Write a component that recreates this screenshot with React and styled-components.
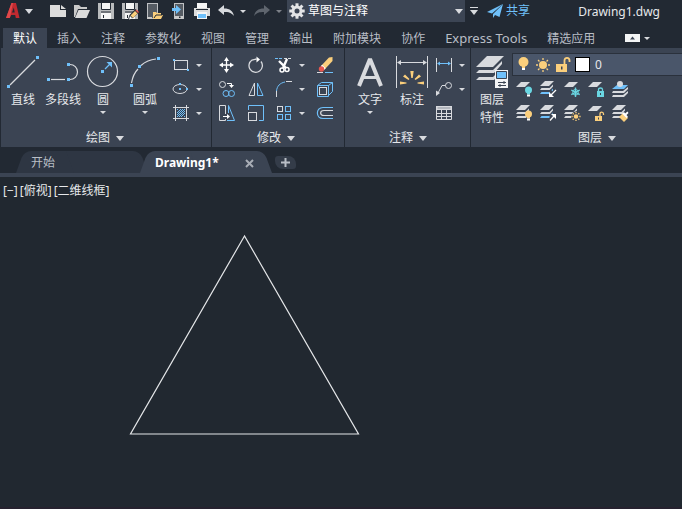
import { useState } from "react";
import styled, { createGlobalStyle } from "styled-components";

const GRAY = "#d8dade";
const BLUE = "#6fc0fa";
const YELLOW = "#fbcf7c";
const CYAN = "#6ad6e2";
const RED = "#e8574f";

const GlobalStyle = createGlobalStyle`
  * {
    box-sizing: border-box;
  }

  body {
    margin: 0;
    background: #212830;
    color: #e6e8eb;
    font-family: "Noto Sans", "Noto Sans CJK SC", sans-serif;
    font-size: 12px;
    line-height: 18px;
  }

  button, select {
    margin: 0;
    padding: 0;
    border: 0;
    background: none;
    color: inherit;
    font: inherit;
    white-space: nowrap;
    cursor: pointer;
  }

  svg {
    display: block;
    flex: none;
    overflow: visible;
    fill: none;
  }
`;

const Page = styled.div`
  display: flex;
  flex-direction: column;
  min-height: 100vh;
`;

const Caret = styled.span`
  flex: none;
  width: 0;
  height: 0;
  border-style: solid;
  border-color: ${GRAY} transparent transparent;
  border-width: ${(props) =>
    props.$size === "large" ? "5px 4px 0" : "3px 3px 0"};
  opacity: ${(props) => (props.$dim ? 0.5 : 1)};
`;

/* ---------- title bar ---------- */

const TitleBar = styled.header`
  display: flex;
  align-items: center;
  height: 28px;
  padding: 0 6px 6px;
  background: #222933;
`;

const BrandButton = styled.button`
  display: flex;
  align-items: center;
  gap: 5px;
  margin-right: 17px;
`;

const QuickTools = styled.div`
  display: flex;
  align-items: center;
  gap: 8px;
`;

const QuickButton = styled.button`
  display: flex;
  align-items: center;
  gap: 6px;
`;

const Workspace = styled.label`
  position: relative;
  display: flex;
  align-items: center;
  flex: 0 1 178px;
  align-self: stretch;
  margin-left: 5px;
  padding: 0 2px;
  background: #3c4554;

  select {
    flex: 1;
    min-width: 0;
    height: 20px;
    padding-left: 3px;
    appearance: none;
    outline: none;
    color: #fff;
  }
`;

const MoreButton = styled.button`
  display: flex;
  flex-direction: column;
  align-items: center;
  gap: 2px;
  margin: 0 9px 0 5px;

  &::before {
    content: "";
    width: 8px;
    height: 1px;
    background: ${GRAY};
  }
`;

const ShareButton = styled.button`
  display: flex;
  align-items: center;
  gap: 3px;
  color: ${BLUE};
`;

const FileName = styled.h1`
  flex: 1;
  margin: 2px 16px 0 24px;
  font-size: 12px;
  font-weight: 400;
  text-align: right;
  white-space: nowrap;
`;

/* ---------- ribbon ---------- */

const RibbonTabs = styled.nav`
  display: flex;
  height: 20px;
  padding-left: 3px;
  background: #222933;
`;

const RibbonTab = styled.button`
  padding: 0 10px;
  background: ${(props) => (props.$active ? "#3b4453" : "transparent")};
  color: ${(props) => (props.$active ? "#fff" : "#b9bec6")};
  font-size: ${(props) => (props.$latin ? 13 : 12)}px;
  line-height: ${(props) => (props.$latin ? 20 : 22)}px;
`;

const CollapseButton = styled.button`
  display: flex;
  align-items: center;
  gap: 4px;
  margin-left: 20px;
`;

const Ribbon = styled.div`
  display: flex;
  height: 99px;
  padding-left: 1px;
  background: #3b4453;
  border-left: 1px solid #222933;
`;

const PanelBox = styled.section`
  display: flex;
  flex-direction: column;
  flex: ${(props) => (props.$grow ? "1" : "none")};
  min-width: 0;
  padding-top: 5px;
  padding-right: ${(props) => props.$end || 0}px;
  padding-left: 1px;
  border-right: ${(props) => (props.$grow ? 0 : 1)}px solid #222933;
`;

const PanelBody = styled.div`
  display: flex;
  flex: 1;
`;

const PanelTitle = styled.button`
  display: flex;
  align-items: center;
  justify-content: center;
  gap: 6px;
  height: 20px;
  padding-top: 2px;
  padding-left: ${(props) => (props.$grow ? 40 : 0)}px;
`;

const BigButton = styled.button`
  display: flex;
  flex-direction: column;
  align-items: center;
  width: ${(props) => props.$width || 40}px;
  padding-top: 3px;

  ${Caret} {
    margin-top: 2px;
  }
`;

const BigLabel = styled.span`
  margin-top: 3px;
  white-space: pre-line;
`;

const ToolGrid = styled.div`
  display: grid;
  grid-template-columns: ${(props) => props.$columns};
  grid-auto-rows: 24px;
`;

const SmallButton = styled.button`
  display: flex;
  align-items: center;
  justify-content: ${(props) => (props.$menu ? "flex-start" : "center")};
  gap: 7px;
  padding-left: ${(props) => (props.$menu ? 6 : 0)}px;
`;

const LayerArea = styled.div`
  display: flex;
  flex-direction: column;
  flex: 1;
  min-width: 0;
`;

const LayerPicker = styled.label`
  display: flex;
  align-items: center;
  gap: 5px;
  height: 23px;
  margin-bottom: 1px;
  padding-left: 5px;
  background: #4a566a;
  border: 1px solid #2a313c;
  border-right: 0;

  select {
    flex: 1;
    min-width: 0;
    appearance: none;
    outline: none;
  }
`;

const Swatch = styled.span`
  width: 15px;
  height: 15px;
  background: #fff;
  border: 1px solid #000;
`;

/* ---------- drawing files ---------- */

const FileTabs = styled.nav`
  display: flex;
  align-items: flex-end;
  height: 30px;
  padding-left: 20px;
  background: #222933;
  border-bottom: 4px solid #3b4453;
`;

const FileTab = styled.div`
  position: relative;
  z-index: ${(props) => (props.$active ? 1 : 0)};
  display: flex;
  align-items: center;
  justify-content: space-between;
  width: 124px;
  height: 22px;
  padding: 2px 14px 0 11px;
  color: ${(props) => (props.$active ? "#fff" : "#b9bec6")};
  font-weight: ${(props) => (props.$active ? 700 : 400)};

  &::before,
  &::after {
    content: "";
    position: absolute;
    z-index: -1;
    top: 0;
    bottom: 0;
    background: ${(props) => (props.$active ? "#3b4453" : "#2e3643")};
  }

  &::before {
    left: 0;
    right: 50%;
    border-top-left-radius: 7px;
    transform: skewX(-20deg);
  }

  &::after {
    left: 40%;
    right: 0;
    border-top-right-radius: 7px;
    transform: skewX(20deg);
  }
`;

const AddTab = styled.button`
  display: flex;
  align-items: center;
  justify-content: center;
  width: 21px;
  height: 13px;
  margin: 0 0 4px 7px;
  border-radius: 3px 8px 3px 8px;
  background: #343c49;
`;

const Viewport = styled.main`
  position: relative;
  flex: 1;
  padding: 5px 3px;
  background: #212830;
`;

const ViewControls = styled.div`
  display: flex;
  gap: 2px;
`;

const Drawing = styled.svg`
  position: absolute;
  inset: 0;
  width: 100%;
  height: 100%;
  pointer-events: none;
`;

const CommandEdge = styled.footer`
  height: 2px;
  background: #26222f;
`;

/* ---------- icons ---------- */

const Dot = ({ x, y, s = 3, fill = BLUE }) => (
  <rect x={x - s / 2} y={y - s / 2} width={s} height={s} fill={fill} />
);

const Bulb = ({ x, y, color, r = 3.5 }) => (
  <g>
    <circle cx={x} cy={y} r={r} fill={color} />
    <path d={`M${x - 1.5} ${y + r - 1}h3v2h-3z`} fill={color} />
    <path d={`M${x - 1.5} ${y + r + 1}h3v2h-3z`} fill="#fff" />
  </g>
);

const Sun = ({ x, y, r, ray }) => (
  <g>
    <circle cx={x} cy={y} r={r} fill={YELLOW} />
    {[0, 45, 90, 135, 180, 225, 270, 315].map((angle) => (
      <path
        key={angle}
        d={`M${x + r + 1} ${y}h${ray}`}
        stroke={YELLOW}
        strokeWidth="1.3"
        transform={`rotate(${angle} ${x} ${y})`}
      />
    ))}
  </g>
);

const Sheet = ({ y = 0, fill = GRAY }) => (
  <path d={`M5 ${y}h9l-5 5H0z`} fill={fill} />
);

// stack of three sheets, the lower two show only their edge
const Stack = ({ middle = GRAY, bottom = GRAY }) => (
  <g>
    <Sheet />
    <path d="M1.5 7H9.5L13 3.5V5.5L10 9H0z" fill={middle} />
    <path d="M1.5 11H9.5L13 7.5V9.5L10 13H0z" fill={bottom} />
  </g>
);

const Floppy = () => (
  <g>
    <path d="M0 0h16v16H0z" fill="#b9bbbd" />
    <path d="M4 0h8v6H4z" fill="#f5f5f5" />
    <path d="M3 10h10v6H3z" fill="#f5f5f5" />
    <path d="M3 9h10M3.5 0v6.5h9V0M5.5 12v3" stroke="#222933" />
  </g>
);

const icons = {
  logo: (
    <g>
      <path d="M0 15L5.5 0H10L13.5 15H9.8L9.2 12H5.2L3.8 15z" fill="#c02a30" />
      <path d="M6 9.5L7.8 4.5L8.7 9.5z" fill="#222933" />
      <path d="M0 15L5.5 0H7L3.8 15z" fill="#e0484a" />
    </g>
  ),
  new: (
    <g>
      <path d="M0 2H10V7H16V14H0z" fill="#dcdcdc" />
      <path d="M11 2L16 6H11z" fill="#dcdcdc" />
    </g>
  ),
  open: (
    <g>
      <path d="M0 14V2H5L7 4H13V6H4L1 14z" fill="#c9c9c9" />
      <path d="M4.5 7H16L12.5 15H1z" fill="#dcdcdc" />
    </g>
  ),
  save: <Floppy />,
  saveAs: (
    <g>
      <Floppy />
      <path d="M6 16.5L7.5 12L13.5 6L17 9.5L11 15z" fill="#222933" />
      <path d="M8.5 12.5L13 8L15.5 10.5L11 15z" fill={YELLOW} />
      <path d="M13.5 7.5L14.5 6.5L17 9L16 10z" fill={RED} />
      <path d="M8 13L10.5 15.5L7 16.5z" fill="#fff" />
    </g>
  ),
  openMobile: (
    <g>
      <rect x="1.5" y="0.5" width="10" height="15" fill="#555b63" stroke="#bfc1c4" />
      <path d="M1 14h5v2H1z" fill="#c9c9c9" />
      <path d="M7 16V9h3l1 1h4v2h2l-2 4z" fill={YELLOW} />
      <path d="M8 15l2-3h6" stroke="#222933" />
    </g>
  ),
  saveMobile: (
    <g>
      <rect x="4.5" y="0.5" width="9" height="15" fill="#555b63" stroke="#bfc1c4" />
      <path d="M5 13h8v3H5z" fill="#c9c9c9" />
      <path d="M9 13.5h1.5v1.5H9z" fill="#222933" />
      <path d="M2 5h4V2l5 4.5L6 11V8H2z" fill={BLUE} />
    </g>
  ),
  print: (
    <g>
      <path d="M3 0h10v5H3z" fill="#f5f5f5" />
      <path d="M0 5h16v8H0z" fill="#dcdcdc" />
      <path d="M2 6.5h12" stroke="#222933" />
      <path d="M3 9h10v7H3z" fill="#f5f5f5" />
      <path d="M4 11h8v4H4z" fill={BLUE} />
    </g>
  ),
  undo: (
    <path d="M0 7L6 2V5.5C12 5.5 15 8 16 13C13 9.5 11 9 6 9V12z" fill={GRAY} />
  ),
  redo: (
    <path d="M16 7L10 2V5.5C4 5.5 1 8 0 13C3 9.5 5 9 10 9V12z" fill="#5f656e" />
  ),
  gear: (
    <g stroke="#e4e5e7">
      <circle cx="8" cy="8" r="4" strokeWidth="3" />
      {[0, 45, 90, 135, 180, 225, 270, 315].map((angle) => (
        <path
          key={angle}
          d="M8 3V0.3"
          strokeWidth="3"
          transform={`rotate(${angle} 8 8)`}
        />
      ))}
    </g>
  ),
  share: (
    <g fill={BLUE}>
      <path d="M0 9L16 1L5 10.5z" />
      <path d="M6 11L16 1L12.5 14L8 12L6 15z" />
    </g>
  ),
  line: (
    <g>
      <path d="M3 29L28 4" stroke={GRAY} strokeWidth="1.2" />
      <Dot x={1.5} y={30.5} />
      <Dot x={30.5} y={1.5} />
    </g>
  ),
  polyline: (
    <g>
      <path d="M4 23.5H18" stroke={GRAY} strokeWidth="1.2" />
      <path d="M23 8.5A7.5 7.5 0 0 1 23 23.5" stroke={GRAY} strokeWidth="1.2" />
      <Dot x={1.5} y={23.5} />
      <Dot x={21.5} y={23.5} />
      <Dot x={21.5} y={8.5} />
    </g>
  ),
  circle: (
    <g>
      <circle cx="15.5" cy="15.5" r="15" stroke={GRAY} strokeWidth="1.2" />
      <Dot x={15.5} y={15.5} />
      <path d="M18 13L23 8" stroke={BLUE} strokeWidth="1.3" />
      <path d="M25 6V11.5L19.5 6z" fill={BLUE} />
    </g>
  ),
  arc: (
    <g>
      <path
        d="M2.5 27C3.5 21 6 16 9 13M12 9.5C17 5 21 3.5 27 3"
        stroke={GRAY}
        strokeWidth="1.2"
      />
      <Dot x={2.5} y={29.5} />
      <Dot x={10.5} y={10.5} />
      <Dot x={29.5} y={2.5} />
    </g>
  ),
  rect: (
    <g>
      <rect x="1.5" y="3.5" width="13" height="9" stroke={GRAY} />
      <Dot x={1} y={3} s={2} />
      <Dot x={15} y={13} s={2} />
    </g>
  ),
  ellipse: (
    <g>
      <ellipse cx="7" cy="8" rx="7" ry="4.5" stroke={GRAY} />
      <Dot x={7} y={3} s={2} />
      <Dot x={7} y={8} s={2} />
      <Dot x={14} y={8} s={2} />
    </g>
  ),
  hatch: (
    <g>
      <path d="M2.5 0V16M13.5 0V16M0 2.5H16M0 13.5H16" stroke={GRAY} />
      <path
        d="M4 8L8 4M4 12L12 4M8 12L12 8M4 5L5 4M11 12L12 11M4 10L10 4M6 12L12 6"
        stroke={BLUE}
      />
    </g>
  ),
  move: (
    <g fill="#fff">
      <path d="M7.5 2V14M2 8H13" stroke="#fff" strokeWidth="1.3" />
      <path d="M7.5 0L10 4H5zM7.5 16L10 12H5zM0 8L4 5.5V10.5zM15 8L11 5.5V10.5z" />
    </g>
  ),
  rotate: (
    <g>
      <path d="M13 4.5A6.7 6.7 0 1 1 4 3L8.5 2" stroke={GRAY} strokeWidth="1.3" />
      <path d="M8.5 -0.5L12 2.5L8.5 5.5z" fill="#fff" />
    </g>
  ),
  trim: (
    <g>
      <path d="M-1 1.5H6" stroke={BLUE} strokeDasharray="3 1" />
      <path d="M8 1.5H16" stroke={GRAY} strokeDasharray="3 1" />
      <path d="M3 4L10 11M11 2L7 11" stroke="#fff" strokeWidth="2.4" />
      <circle cx="6" cy="13" r="2" stroke="#fff" strokeWidth="1.5" />
      <circle cx="11" cy="12.5" r="2" stroke="#fff" strokeWidth="1.5" />
    </g>
  ),
  erase: (
    <g>
      <path d="M4 9L12 0.5L15.5 0V4L7.5 12.5z" fill={YELLOW} />
      <path d="M4.5 8.5L8 12" stroke="#fff" strokeWidth="2" />
      <circle cx="4.5" cy="12" r="2.7" fill={RED} />
      <path d="M0 15.5H6" stroke={GRAY} />
      <path d="M8 15.5H16" stroke={BLUE} />
    </g>
  ),
  copy: (
    <g>
      <circle cx="3.5" cy="3.5" r="3" stroke={GRAY} />
      <path d="M8 2.5H12.5V4" stroke="#fff" />
      <path d="M10 4H15L12.5 7z" fill="#fff" />
      <circle cx="7" cy="12.5" r="3" stroke={BLUE} />
      <circle cx="12.5" cy="12.5" r="3" stroke={BLUE} />
    </g>
  ),
  mirror: (
    <g>
      <path d="M6.5 2V14.5H1z" stroke={GRAY} />
      <path d="M9.5 2V14.5H15z" stroke={BLUE} />
    </g>
  ),
  fillet: (
    <g>
      <path d="M0.5 10C1 5 4 2 9 1" stroke={BLUE} />
      <path d="M10 0.5H16M0.5 10V16" stroke={GRAY} />
    </g>
  ),
  explode: (
    <g>
      <path d="M0.5 4.5L4.5 1.5H15.5V10.5L11.5 14.5" stroke={BLUE} />
      <path d="M0.5 4.5H11.5V15.5H0.5zM11.5 4.5L15.5 1.5" stroke={BLUE} />
      <rect x="2.5" y="6.5" width="7" height="7" stroke={GRAY} />
    </g>
  ),
  stretch: (
    <g>
      <path d="M6.5 9V0.5H0.5V15.5H6.5V14" stroke={GRAY} />
      <path d="M9.5 8V0.5L15.5 15.5H8" stroke={BLUE} />
      <path d="M4 11.5H9" stroke="#fff" />
      <path d="M8 9L11 11.5L8 14z" fill="#fff" />
    </g>
  ),
  scale: (
    <g>
      <path d="M0.5 5V0.5H15.5V15.5H11" stroke={BLUE} />
      <rect x="0.5" y="7.5" width="8" height="8" stroke={GRAY} />
    </g>
  ),
  array: (
    <g>
      <rect x="1.5" y="1.5" width="5" height="5" stroke={GRAY} />
      <rect x="9.5" y="1.5" width="5" height="5" stroke={BLUE} />
      <rect x="1.5" y="9.5" width="5" height="5" stroke={BLUE} />
      <rect x="9.5" y="9.5" width="5" height="5" stroke={BLUE} />
    </g>
  ),
  offset: (
    <g>
      <path d="M16 2.5H6C-1.5 2.5 -1.5 13.5 6 13.5H16" stroke={BLUE} strokeWidth="1.2" />
      <path d="M16 5.5H7C2.5 5.5 2.5 10.5 7 10.5H16" stroke={GRAY} strokeWidth="1.2" />
    </g>
  ),
  text: (
    <g stroke={GRAY} strokeWidth="4">
      <path d="M5 30L16 3L27 30" strokeLinejoin="bevel" />
      <path d="M9 21.5H23" strokeWidth="3" />
    </g>
  ),
  dimension: (
    <g>
      <path d="M0.5 0V32M31.5 0V32M4 6.5H28" stroke={GRAY} />
      <path d="M1 6.5L5 4V9zM31 6.5L27 4V9z" fill={GRAY} />
      <path
        d="M14.3 15H17.7L16.7 22H15.3zM7 20.5L9 18.5L13.5 23L12.5 24zM25 20.5L23 18.5L18.5 23L19.5 24zM4 25.5L10.5 26.5V27.5L4 28.5zM28 25.5L21.5 26.5V27.5L28 28.5z"
        fill={YELLOW}
      />
    </g>
  ),
  linear: (
    <g>
      <path d="M0.5 1V15M15.5 1V15" stroke={GRAY} />
      <path d="M3 6.5H13" stroke={BLUE} />
      <path d="M1 6.5L4 4.5V8.5zM15 6.5L12 4.5V8.5z" fill={BLUE} />
    </g>
  ),
  leader: (
    <g>
      <circle cx="12.5" cy="4.5" r="3" stroke={GRAY} />
      <path d="M9.5 4.5H6L2 12" stroke={GRAY} />
      <path d="M0 15V9.5L4 12z" fill={GRAY} />
    </g>
  ),
  table: (
    <g>
      <path d="M0 1h16v4H0z" fill={GRAY} />
      <path d="M1.5 3h13" stroke="#8b919b" />
      <path d="M0.5 2V14.5H15.5V2M0 8.5H16M0 11.5H16M5.5 5V14M10.5 5V14" stroke={GRAY} />
    </g>
  ),
  layerProps: (
    <g>
      <path d="M11 0H28L17 11H0z" fill={GRAY} />
      <path d="M3 14H17L26 5V8L18 17H0zM3 21H17L20 18V22L18 24H0z" fill={GRAY} />
      <path d="M19 14h13v18H19z" fill="#f3f4f5" />
      <path d="M20.5 15.5h10v7h-10z" fill={BLUE} stroke="#3b4453" />
      <path d="M22 26.5h8M22 29.5h8M28 25v3M24 28v3" stroke="#3b4453" />
    </g>
  ),
  bulb: <Bulb x={5.5} y={5} r={5} color={YELLOW} />,
  sun: <Sun x={8} y={8} r={4} ray={2} />,
  unlock: (
    <g>
      <path d="M0 7h11v8H0z" fill={YELLOW} />
      <path d="M8.5 8V3.5C8.5 0 13.5 0 13.5 3.5V5" stroke={YELLOW} strokeWidth="1.8" />
      <path d="M5 9.5h1.5v3H5z" fill="#3b4453" />
    </g>
  ),
  layerOff: (
    <g>
      <Sheet y={1} />
      <Bulb x={12.5} y={9} color={CYAN} />
    </g>
  ),
  layerIsolate: (
    <g>
      <Stack bottom={BLUE} />
      <path d="M9 16L10 8L17 14L15 17z" fill="#3b4453" />
      <path d="M16 9L11 14" stroke="#fff" strokeWidth="1.3" />
      <path d="M9 16V11L14 16z" fill="#fff" />
    </g>
  ),
  layerFreeze: (
    <g>
      <Sheet y={1} />
      <path
        d="M11.5 6.5V16M7.3 9L15.7 13.6M7.3 13.6L15.7 9"
        stroke={CYAN}
        strokeWidth="1.4"
      />
      <circle cx="11.5" cy="11.3" r="2.8" stroke={CYAN} />
    </g>
  ),
  layerLock: (
    <g>
      <Sheet y={1} />
      <path d="M9 10h7v6H9z" fill={CYAN} />
      <path d="M10.5 10V8.5C10.5 6.5 14.5 6.5 14.5 8.5V10" stroke={CYAN} strokeWidth="1.3" />
      <path d="M12 12h1v2h-1z" fill="#3b4453" />
    </g>
  ),
  layerCurrent: (
    <g>
      <path d="M5 4h11l-4 4H0z" fill={BLUE} />
      <circle cx="8" cy="3" r="3" fill={GRAY} />
      <path d="M1 10H11L16 6V8L12 12H0zM1 14H11L16 10V12L12 16H0z" fill={GRAY} />
    </g>
  ),
  layerOn: (
    <g>
      <Stack />
      <Bulb x={12.5} y={9} color={YELLOW} />
    </g>
  ),
  layerUnisolate: (
    <g>
      <Stack bottom={BLUE} />
      <path d="M9 16L10 9L17 8V17z" fill="#3b4453" />
      <path d="M10 15.5L14 11" stroke="#fff" strokeWidth="1.3" />
      <path d="M16 9V14L11 9z" fill="#fff" />
    </g>
  ),
  layerThaw: (
    <g>
      <Stack />
      <circle cx="12" cy="11.5" r="5" fill="#3b4453" />
      <Sun x={12} y={11.5} r={2.3} ray={1.3} />
    </g>
  ),
  layerUnlock: (
    <g>
      <Sheet y={1} />
      <path d="M7 11h7v5H7z" fill={YELLOW} />
      <path d="M12 11V9C12 6.5 15.5 6.5 15.5 9V10" stroke={YELLOW} strokeWidth="1.3" />
      <path d="M10 12.5h1v2h-1z" fill="#3b4453" />
    </g>
  ),
  layerMatch: (
    <g>
      <Stack />
      <path d="M7 12L11 8L16 13L12 17z" fill={YELLOW} />
      <path d="M10 8.5L12 7L13 8.5L15.5 6.5L16.5 8L14.5 10L16 12L14.5 13z" fill="#fff" />
    </g>
  ),
};

const Icon = ({ name, width = 16, height = 16 }) => (
  <svg width={width} height={height} aria-hidden="true">
    {icons[name]}
  </svg>
);

/* ---------- data ---------- */

const quickTools = ["new", "open", "save", "saveAs", "openMobile", "saveMobile", "print"];

const ribbonTabs = [
  { label: "默认" },
  { label: "插入" },
  { label: "注释" },
  { label: "参数化" },
  { label: "视图" },
  { label: "管理" },
  { label: "输出" },
  { label: "附加模块" },
  { label: "协作" },
  { label: "Express Tools", latin: true },
  { label: "精选应用" },
];

const modifyTools = [
  { name: "move" },
  { name: "rotate" },
  { name: "trim", menu: true },
  { name: "erase" },
  { name: "copy" },
  { name: "mirror" },
  { name: "fillet", menu: true },
  { name: "explode" },
  { name: "stretch" },
  { name: "scale" },
  { name: "array", menu: true },
  { name: "offset" },
];

const layerTools = [
  "layerOff",
  "layerIsolate",
  "layerFreeze",
  "layerLock",
  "layerCurrent",
  "layerOn",
  "layerUnisolate",
  "layerThaw",
  "layerUnlock",
  "layerMatch",
];

/* ---------- parts ---------- */

const Panel = ({ title, grow, end, children }) => (
  <PanelBox $grow={grow} $end={end}>
    <PanelBody>{children}</PanelBody>
    <PanelTitle $grow={grow}>
      {title}
      <Caret $size="large" />
    </PanelTitle>
  </PanelBox>
);

const BigTool = ({ name, label, width, menu }) => (
  <BigButton $width={width}>
    <Icon name={name} width={32} height={32} />
    <BigLabel>{label}</BigLabel>
    {menu && <Caret />}
  </BigButton>
);

const SmallTool = ({ name, menu, align }) => (
  <SmallButton $menu={menu || align} aria-label={name}>
    <Icon name={name} />
    {menu && <Caret />}
  </SmallButton>
);

const App = () => {
  const [activeTab, setActiveTab] = useState("默认");

  return (
    <Page>
      <GlobalStyle />
      <TitleBar>
        <BrandButton aria-label="menu">
          <Icon name="logo" width={14} />
          <Caret $size="large" />
        </BrandButton>
        <QuickTools>
          {quickTools.map((name) => (
            <QuickButton key={name} aria-label={name}>
              <Icon name={name} />
            </QuickButton>
          ))}
          <QuickButton aria-label="undo">
            <Icon name="undo" />
            <Caret />
          </QuickButton>
          <QuickButton aria-label="redo">
            <Icon name="redo" />
            <Caret $dim />
          </QuickButton>
        </QuickTools>
        <Workspace>
          <Icon name="gear" />
          <select aria-label="workspace">
            <option>草图与注释</option>
          </select>
          <Caret $size="large" />
        </Workspace>
        <MoreButton aria-label="more">
          <Caret $size="large" />
        </MoreButton>
        <ShareButton>
          <Icon name="share" />
          共享
        </ShareButton>
        <FileName>Drawing1.dwg</FileName>
      </TitleBar>

      <RibbonTabs>
        {ribbonTabs.map(({ label, latin }) => (
          <RibbonTab
            key={label}
            $latin={latin}
            $active={label === activeTab}
            onClick={() => setActiveTab(label)}
          >
            {label}
          </RibbonTab>
        ))}
        <CollapseButton aria-label="collapse">
          <svg width="15" height="8">
            <path d="M0 0h15v8H0z" fill="#f3f4f5" />
            <path d="M5 5.5L7.5 2.5L10 5.5z" fill="#3b4453" />
          </svg>
          <Caret />
        </CollapseButton>
      </RibbonTabs>

      <Ribbon>
        <Panel title="绘图" end={4}>
          <BigTool name="line" label="直线" />
          <BigTool name="polyline" label="多段线" />
          <BigTool name="circle" label="圆" menu />
          <BigTool name="arc" label="圆弧" width={44} menu />
          <ToolGrid $columns="40px">
            <SmallTool name="rect" menu />
            <SmallTool name="ellipse" menu />
            <SmallTool name="hatch" menu />
          </ToolGrid>
        </Panel>

        <Panel title="修改" end={5}>
          <ToolGrid $columns="28px 29px 40px 29px">
            {modifyTools.map((tool) => (
              <SmallTool key={tool.name} {...tool} />
            ))}
          </ToolGrid>
        </Panel>

        <Panel title="注释">
          <BigTool name="text" label="文字" width={48} menu />
          <BigTool name="dimension" label="标注" width={36} />
          <ToolGrid $columns="40px">
            <SmallTool name="linear" menu />
            <SmallTool name="leader" menu />
            <SmallTool name="table" align />
          </ToolGrid>
        </Panel>

        <Panel title="图层" grow>
          <BigTool name="layerProps" label={"图层\n特性"} />
          <LayerArea>
            <LayerPicker>
              <Icon name="bulb" width={12} />
              <Icon name="sun" />
              <Icon name="unlock" width={14} />
              <Swatch />
              <select aria-label="layer">
                <option>0</option>
              </select>
            </LayerPicker>
            <ToolGrid $columns="repeat(5, 24px)">
              {layerTools.map((name) => (
                <SmallTool key={name} name={name} />
              ))}
            </ToolGrid>
          </LayerArea>
        </Panel>
      </Ribbon>

      <FileTabs>
        <FileTab>开始</FileTab>
        <FileTab $active>
          Drawing1*
          <button aria-label="close">
            <svg width="9" height="9">
              <path d="M1 1L8 8M8 1L1 8" stroke="#a9aeb6" strokeWidth="2" />
            </svg>
          </button>
        </FileTab>
        <AddTab aria-label="new drawing">
          <svg width="9" height="9">
            <path d="M4.5 0V9M0 4.5H9" stroke="#b9bec6" strokeWidth="2" />
          </svg>
        </AddTab>
      </FileTabs>

      <Viewport>
        <ViewControls>
          <button>[−]</button>
          <button>[俯视]</button>
          <button>[二维线框]</button>
        </ViewControls>
        <Drawing>
          <path d="M244.5 59L130.5 257H358.5z" stroke="#e4e6e8" strokeWidth="1.2" />
        </Drawing>
      </Viewport>
      <CommandEdge />
    </Page>
  );
};

export default App;
